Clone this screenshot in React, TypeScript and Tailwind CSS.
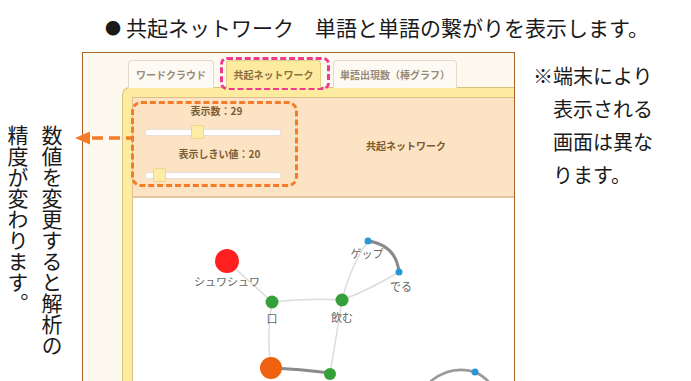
import React from 'react';

const font = { fontFamily: '"Noto Sans CJK JP", "Noto Sans", sans-serif' };

const Slider: React.FC<{ thumb: number }> = ({ thumb }) => (
  <div className="relative ml-[11px] w-[136px] h-[7px] rounded-[2px] bg-white border border-[#e6e0d8]">
    <div
      className="absolute top-[-5px] w-[13px] h-[14px] rounded-[2px] bg-[#fdeca6] border border-[#efd68a]"
      style={{ left: thumb }}
    />
  </div>
);

const Graph: React.FC = () => (
  <svg width="380" height="190" viewBox="134 199 380 190" className="block">
    <g fill="none" strokeLinecap="round">
      <path d="M228,262 L273,303" stroke="#dcdcdc" strokeWidth="1.5" />
      <path d="M273,303 Q308,299 343,301" stroke="#dcdcdc" strokeWidth="1.5" />
      <path d="M343,301 Q352,266 369,242" stroke="#dcdcdc" strokeWidth="1.5" />
      <path d="M343,301 Q372,290 400,273" stroke="#dcdcdc" strokeWidth="1.5" />
      <path d="M273,303 Q267,336 272,369" stroke="#dcdcdc" strokeWidth="1.5" />
      <path d="M343,301 Q337,340 331,374" stroke="#dcdcdc" strokeWidth="1.5" />
      <path d="M369,242 Q397,246 400,273" stroke="#8a8a8a" strokeWidth="3" />
      <path d="M272,369 Q300,370 331,374" stroke="#8a8a8a" strokeWidth="3" />
      <path d="M432,382 Q452,366 476,373 Q483,376 490,383" stroke="#9a9a9a" strokeWidth="2.5" />
    </g>
    <circle cx="228" cy="262" r="12" fill="#ff1f1f" />
    <circle cx="273" cy="303" r="6.5" fill="#35a03a" />
    <circle cx="343" cy="301" r="6.5" fill="#35a03a" />
    <circle cx="369" cy="242" r="3.5" fill="#2a96d6" />
    <circle cx="400" cy="273" r="3.5" fill="#2a96d6" />
    <circle cx="272" cy="369" r="11" fill="#ee6210" />
    <circle cx="331" cy="375" r="6" fill="#35a03a" />
    <circle cx="476" cy="373" r="3.5" fill="#2a96d6" />
    <g fill="#666" fontSize="11" textAnchor="middle" style={font}>
      <text x="228" y="287">シュワシュワ</text>
      <text x="273" y="324">口</text>
      <text x="343" y="323">飲む</text>
      <text x="368" y="259">ゲップ</text>
      <text x="402" y="292">でる</text>
    </g>
  </svg>
);

export default function App() {
  return (
    <div className="relative w-[691px] h-[381px] overflow-hidden bg-white text-[#1a1a1a]" style={font}>
      <div className="h-[52px] pt-[12px] pl-[105px] text-[21px] leading-[30px] whitespace-nowrap">
        <span className="inline-block w-[21px] text-[16px] align-top">●</span>
        共起ネットワーク　単語と単語の繋がりを表示します。
      </div>

      <div className="flex items-start">
        <div className="w-[82px] pl-[1px] pt-[73px]">
          <p className="[writing-mode:vertical-rl] text-[21px] leading-[34px] text-[#1a1a1a]">
            数値を変更すると解析の
            <br />
            精度が変わります。
          </p>
        </div>

        <div className="w-[433px] h-[340px] border-[1.5px] border-[#a8632b] bg-[#fdf9ef] overflow-hidden pt-[7px]">
          <div className="relative z-10 flex gap-[12px] ml-[45px] -mb-px text-[10px] font-bold">
            <div className="w-[86px] h-[28px] flex items-center justify-center rounded-t-[4px] border border-b-0 border-[#e2dccf] bg-[#fdfaf3] text-[#978a79]">
              ワードクラウド
            </div>
            <div className="w-[95px] h-[28px] flex items-center justify-center rounded-t-[4px] border border-b-0 border-[#e4cd84] bg-[#fdeba0] text-[#8c6e3f]">
              共起ネットワーク
            </div>
            <div className="w-[124px] h-[28px] flex items-center justify-center rounded-t-[4px] border border-b-0 border-[#e2dccf] bg-[#fdfaf3] text-[#978a79]">
              単語出現数（棒グラフ）
            </div>
          </div>

          <div className="ml-[39px] h-[300px] rounded-tl-[8px] border-l border-t border-[#d9c183] bg-[#fdeba0] pt-[9px] pl-[9px]">
            <div className="h-full border-l border-t border-[#dbc08c] bg-white">
              <div className="h-[100px] flex bg-[#fce3c4] border-b-2 border-[#e2c6a4]">
                <div className="ml-[-2px] mt-[3px] w-[167px] h-[86px] rounded-[10px] border-[3px] border-dashed border-[#f47c28] text-[10px] font-bold text-[#7b5d35]">
                  <div className="pt-[1px] leading-[12px] text-center pl-[4px]">表示数：29</div>
                  <div className="mt-[12px]">
                    <Slider thumb={45} />
                  </div>
                  <div className="mt-[12px] leading-[12px] text-center pl-[10px]">表示しきい値：20</div>
                  <div className="mt-[12px]">
                    <Slider thumb={7} />
                  </div>
                </div>
                <div className="flex-1 flex items-center justify-center pb-[4px] text-[10px] font-bold text-[#7b5a2e]">
                  共起ネットワーク
                </div>
              </div>
              <Graph />
            </div>
          </div>
        </div>

        <div className="ml-[18px] pt-[7px] text-[20px] leading-[33px] text-[#1a1a1a] whitespace-nowrap">
          <div>※端末により</div>
          <div className="pl-[20px]">表示される</div>
          <div className="pl-[20px]">画面は異な</div>
          <div className="pl-[20px]">ります。</div>
        </div>
      </div>

      {/* annotations */}
      <div className="absolute left-[220px] top-[57px] w-[110px] h-[33px] rounded-[7px] border-[3px] border-dashed border-[#ef3a8e]" />
      <svg className="absolute left-[70px] top-[128px]" width="64" height="20" viewBox="0 0 64 20">
        <path d="M5,10 L20,3.5 L20,16.5 Z" fill="#f47c28" />
        <path d="M22,10 L62,10" stroke="#f47c28" strokeWidth="3.5" strokeDasharray="11 6" />
      </svg>
    </div>
  );
}
